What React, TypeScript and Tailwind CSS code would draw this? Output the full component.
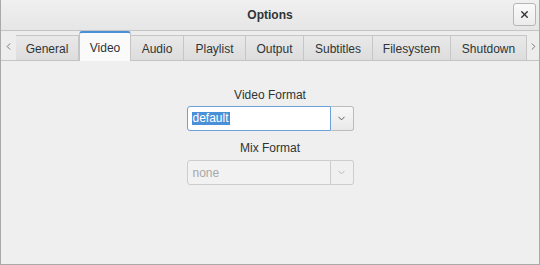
import { ChevronDown, ChevronLeft, ChevronRight, X } from 'lucide-react'

const tabs = [
  { name: 'General', w: 'w-[63px]' },
  { name: 'Video', w: 'w-[52px]', active: true },
  { name: 'Audio', w: 'w-[53px]' },
  { name: 'Playlist', w: 'w-[62px]' },
  { name: 'Output', w: 'w-[58px]' },
  { name: 'Subtitles', w: 'w-[69px]' },
  { name: 'Filesystem', w: 'w-[78px]' },
  { name: 'Shutdown', w: 'w-[76px]' },
]

export default function App() {
  return (
    <div className="w-[540px] h-[265px] flex flex-col bg-[#ededed] border-l border-r border-b border-[#a9a9a9] text-[#2e3436] font-['Liberation_Sans',sans-serif] text-[12px] overflow-hidden">
      {/* 标题栏 */}
      <div className="relative h-[31px] shrink-0 flex items-center justify-center bg-gradient-to-b from-[#f0f0f0] to-[#e6e6e6] border-b border-[#c4c4c4]">
        <span className="font-bold text-[12px]">Options</span>
        <button className="absolute right-[3px] top-[3px] w-[23px] h-[23px] flex items-center justify-center rounded-[3px] border border-[#b6b6b6] bg-gradient-to-b from-[#fafafa] to-[#ececec]">
          <X size={11} strokeWidth={3} className="text-[#2e3436]" />
        </button>
      </div>

      {/* 标签页 */}
      <div className="h-[29px] shrink-0 flex items-end">
        <div className="w-[15px] h-full flex items-center justify-center pt-[2px] text-[#6d6d6d]">
          <ChevronLeft size={11} strokeWidth={2} />
        </div>
        {tabs.map(tab =>
          tab.active ? (
            <div
              key={tab.name}
              className={`${tab.w} h-[30px] -mb-px flex items-center justify-center pt-[1px] bg-[#fafafa] border-x border-[#c4c4c4] border-t-2 border-t-[#4a90d9] rounded-t-[3px] relative z-10`}
            >
              {tab.name}
            </div>
          ) : (
            <div
              key={tab.name}
              className={`${tab.w} h-[25px] flex items-center justify-center pt-[1px] bg-gradient-to-b from-[#e9e9e9] to-[#dddddd] border-t border-r border-[#c6c6c6] first:border-l text-[#2e3436]`}
            >
              {tab.name}
            </div>
          )
        )}
        <div className="flex-1 h-full flex items-center justify-center pt-[2px] text-[#6d6d6d]">
          <ChevronRight size={11} strokeWidth={2} />
        </div>
      </div>

      {/* 内容区 */}
      <div className="flex-1 flex flex-col items-center bg-[#efefef] border-t border-[#c4c4c4] pt-[26px]">
        <div className="h-[16px] leading-[16px]">Video Format</div>
        <div className="mt-[3px] flex h-[25px]">
          <div className="w-[144px] h-full flex items-center pl-[4px] bg-white border border-[#6d9fd8] rounded-l-[3px]">
            <span className="bg-[#4a90d9] text-white px-[1px] leading-[13px]">default</span>
          </div>
          <div className="w-[23px] h-full flex items-center justify-center border border-l-0 border-[#bcbcbc] rounded-r-[3px] bg-gradient-to-b from-[#f7f7f7] to-[#e9e9e9] text-[#4a4a4a]">
            <ChevronDown size={11} strokeWidth={2} />
          </div>
        </div>

        <div className="mt-[9px] h-[16px] leading-[16px]">Mix Format</div>
        <div className="mt-[4px] flex h-[25px]">
          <div className="w-[144px] h-full flex items-center pl-[5px] bg-[#f2f2f2] border border-[#cdcdcd] rounded-l-[3px] text-[#a8a8a8]">
            none
          </div>
          <div className="w-[23px] h-full flex items-center justify-center border border-l-0 border-[#cdcdcd] rounded-r-[3px] bg-[#f0f0f0] text-[#b5b5b5]">
            <ChevronDown size={11} strokeWidth={2} />
          </div>
        </div>
      </div>
    </div>
  )
}
